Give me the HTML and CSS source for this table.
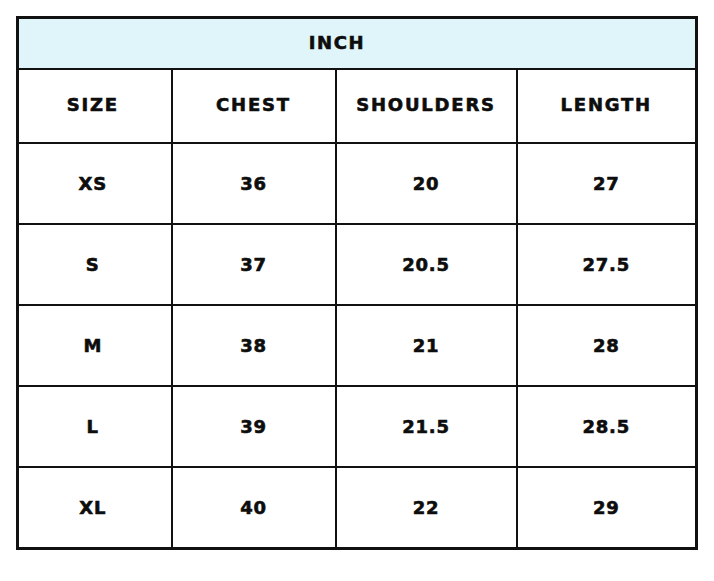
FILE: index.html
```html
<!DOCTYPE html>
<html>
<head>
<meta charset="utf-8">
<link rel="stylesheet" href="styles.css">
</head>
<body>
<table class="size-chart">
  <colgroup>
    <col class="c1"><col class="c2"><col class="c3"><col class="c4">
  </colgroup>
  <thead>
    <tr class="unit-row"><th colspan="4">INCH</th></tr>
    <tr class="head-row"><th class="sz">SIZE</th><th>CHEST</th><th>SHOULDERS</th><th>LENGTH</th></tr>
  </thead>
  <tbody>
    <tr><td class="sz">XS</td><td>36</td><td>20</td><td>27</td></tr>
    <tr><td class="sz">S</td><td>37</td><td>20.5</td><td>27.5</td></tr>
    <tr><td class="sz">M</td><td>38</td><td>21</td><td>28</td></tr>
    <tr><td class="sz">L</td><td>39</td><td>21.5</td><td>28.5</td></tr>
    <tr><td class="sz">XL</td><td>40</td><td>22</td><td>29</td></tr>
  </tbody>
</table>
</body>
</html>
```
FILE: styles.css
```css
html, body {
  margin: 0;
  padding: 0;
  background: #ffffff;
}
body {
  padding: 16px 0 0 16px;
}
.size-chart {
  border-collapse: collapse;
  table-layout: fixed;
  width: 679px;
  border: 3px solid #111;
  font-family: "DejaVu Sans", "Liberation Sans", sans-serif;
  font-weight: bold;
  color: #0d0d0d;
  -webkit-text-stroke: 0.6px #0d0d0d;
}
.c1 { width: 154px; }
.c2 { width: 164px; }
.c3 { width: 181px; }
.c4 { width: 180px; }
.size-chart th, .size-chart td {
  border: 2px solid #111;
  text-align: center;
  vertical-align: middle;
  padding: 0;
}
.unit-row th {
  background: #e0f5f9;
  height: 47px;
  font-size: 18px;
  letter-spacing: 1.6px;
  padding-right: 40px;
  padding-bottom: 2px;
}
.head-row th {
  height: 68px;
  font-size: 18px;
  letter-spacing: 1.8px;
  padding-bottom: 4px;
}
tbody td {
  height: 79px;
  font-size: 18px;
  letter-spacing: 0.8px;
}
.size-chart .sz {
  padding-right: 4px;
}
```
